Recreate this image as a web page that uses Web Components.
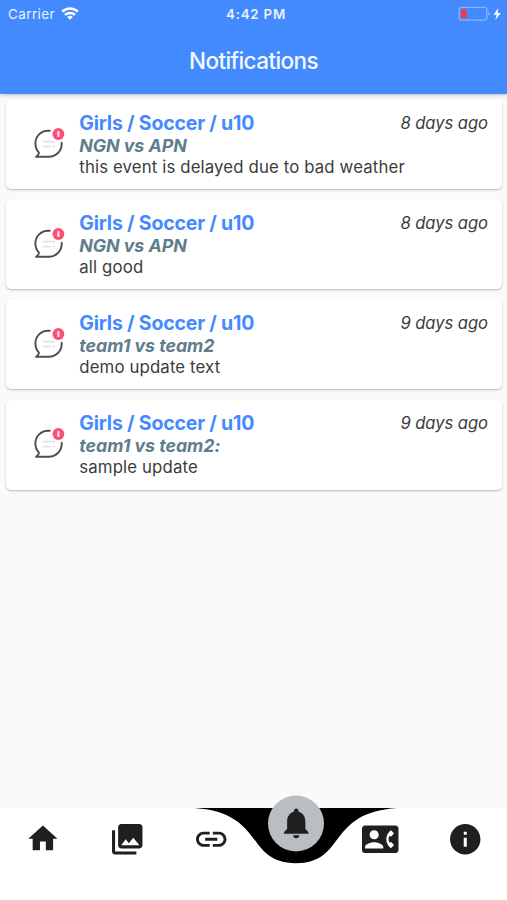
<!DOCTYPE html>
<html lang="en">
<head>
<meta charset="utf-8">
<title>Notifications</title>
<style>
html,body{margin:0;height:100%}
body{font-family:Inter,"Liberation Sans",sans-serif;background:#fafafa;overflow:hidden}
</style>
</head>
<body>
<app-screen></app-screen>
<script>
const define=(name,html)=>{
  const t=document.createElement('template');t.innerHTML=html;
  customElements.define(name,class extends HTMLElement{
    constructor(){super();this.attachShadow({mode:'open'}).append(t.content.cloneNode(true));}
  });
};

define('status-bar',`<style>
:host{display:grid;grid-template-columns:1fr auto 1fr;align-items:center;height:26px;padding:1px 5px 0 8px;box-sizing:border-box;color:#e9f1ff;font-size:13.5px;line-height:24px}
.l{display:flex;align-items:center;gap:6px}
.l span{letter-spacing:.38px}
.t{font-weight:600;font-size:13.3px;letter-spacing:.8px;transform:translateX(1px)}
.r{display:flex;justify-content:flex-end;align-items:center}
svg{display:block}
</style>
<div class="l"><span>Carrier</span>
<svg width="18" height="13" viewBox="0 0 18 13" fill="none" stroke="#fff" stroke-width="2.5"><path d="M1.200 4.700a11.200 11.200 0 0 1 15.600 0"/><path d="M4 7.900a7.200 7.200 0 0 1 10 0"/><path d="M9 12.800 6.200 10a4 4 0 0 1 5.600 0z" fill="#fff" stroke="none"/></svg></div>
<div class="t">4:42 PM</div>
<div class="r"><svg width="44" height="16" viewBox="0 0 44 16"><rect x="1.1" y="1.3" width="27.8" height="12.8" rx="2.6" fill="none" stroke="#86b4ff" stroke-width="1.3"/><rect x="3" y="3.2" width="5.6" height="9" rx="1" fill="#ee3d45"/><path d="M30.400 5.500c1.600.6 1.600 3.800 0 4.400z" fill="#8db8ff"/><path d="M40.300 2 35.600 8.800h3.100L37.300 14l5.500-7h-3.300z" fill="#fff"/></svg></div>`);

define('app-header',`<style>
:host{display:flex;flex-direction:column;height:94px;background:#448aff;box-shadow:0 1px 4px rgba(0,0,0,.24);position:relative;z-index:1}
h1{margin:0;flex:1;display:flex;align-items:center;justify-content:center;color:#f5f9ff;font-size:22.5px;font-weight:500;letter-spacing:-.6px}
</style><status-bar></status-bar><h1><slot></slot></h1>`);

define('chat-icon',`<style>:host{display:block;width:32px;height:34px}svg{display:block}</style>
<svg width="32" height="34" viewBox="0 0 32 34" fill="none"><path d="M16.800 4.800H15.200C7.900 4.800 2.400 10.200 2.400 17.500c0 3.800 1.400 6.800 3.500 9.200.5 1.100-1.300 2.700-2.800 4.100h12.400c7.500 0 13.200-5.800 13.200-13.100v-.9" stroke="#4c4e50" stroke-width="1.9" stroke-linecap="round" stroke-linejoin="round"/><path d="M10.600 15.600h10.300M10.600 20.600h6.500M20.500 20.600h.9" stroke="#dfe3e6" stroke-width="1.7" stroke-linecap="round"/><circle cx="25.400" cy="8" r="5.900" fill="#fb4f75"/><rect x="24.200" y="5" width="2.400" height="6" rx="1" fill="#ffdce4"/></svg>`);

define('notice-card',`<style>
:host{display:flex;box-sizing:border-box;height:90px;padding:11.500px 14px 0 27px;background:#fff;border-radius:5px;box-shadow:0 1px 2px rgba(0,0,0,.22),0 1px 3px rgba(0,0,0,.05)}
chat-icon{margin:15px 14.300px 0 0}
.m{flex:1;min-width:0;white-space:nowrap}
.h,.s,.b{display:block}
.h{font-size:19.500px;line-height:24px;font-weight:650;color:#448aff;letter-spacing:-.2px}
.s{font-size:17.800px;line-height:21px;font-weight:650;font-style:italic;color:#607d8b;letter-spacing:-.05px}
.b{font-size:16.800px;line-height:22px;color:#3c3c3c;letter-spacing:.13px}
.d{font-size:16.600px;line-height:25px;font-style:italic;color:#3c3c3c;white-space:nowrap;margin-left:-120px;letter-spacing:-.05px}
</style><chat-icon></chat-icon><div class="m"><span class="h"><slot name="title"></slot></span><span class="s"><slot name="teams"></slot></span><span class="b"><slot></slot></span></div><span class="d"><slot name="date"></slot></span>`);

define('notice-list',`<style>:host{display:flex;flex-direction:column;gap:10.200px;padding:5px 5px 0 6px;flex:1}</style><slot></slot>`);

const icons={
home:'<path transform="translate(.9 .1) scale(.96)" d="M10 20v-6h4v6h5v-8h3L12 3 2 12h3v8z"/>',
photos:'<path d="M22 16V4c0-1.1-.9-2-2-2H8c-1.1 0-2 .9-2 2v12c0 1.100.9 2 2 2h12c1.100 0 2-.9 2-2zm-11-4 2.030 2.710L16 11l4 5H8l3-4zM2 6v14c0 1.100.9 2 2 2h14v-2H4V6H2z"/>',
link:'<path d="M3.900 12c0-1.710 1.390-3.100 3.100-3.100h4V7H7c-2.760 0-5 2.240-5 5s2.240 5 5 5h4v-1.900H7c-1.710 0-3.100-1.390-3.100-3.100zM8 13h8v-2H8v2zm9-6h-4v1.900h4c1.710 0 3.100 1.390 3.100 3.100s-1.390 3.100-3.100 3.100h-4V17h4c2.760 0 5-2.240 5-5s-2.240-5-5-5z"/>',
bell:'<path transform="translate(0 -.5)" d="M12 22c1.100 0 2-.9 2-2h-4c0 1.100.89 2 2 2zm6-6v-5c0-3.070-1.640-5.640-4.500-6.320V4c0-.83-.67-1.500-1.500-1.500s-1.500.67-1.500 1.500v.68C7.630 5.360 6 7.920 6 11v5l-2 2v1h16v-1l-2-2z"/>',
contact:'<path d="M22 3H2C.9 3 0 3.900 0 5v14c0 1.100.9 2 2 2h20c1.100 0 1.990-.9 1.990-2L24 5c0-1.100-.9-2-2-2zM8 6c1.660 0 3 1.340 3 3s-1.340 3-3 3-3-1.340-3-3 1.340-3 3-3zm6 12H2v-1c0-2 4-3.100 6-3.100s6 1.100 6 3.100v1zm3.850-4h1.640L21 16l-1.990 1.990c-1.310-.98-2.280-2.380-2.730-3.990-.18-.64-.28-1.310-.28-2s.1-1.360.28-2c.45-1.620 1.420-3.010 2.730-3.990L21 8l-1.510 2h-1.640c-.22.63-.35 1.300-.35 2s.13 1.370.35 2z"/>',
info:'<path d="M12 2C6.480 2 2 6.480 2 12s4.480 10 10 10 10-4.480 10-10S17.520 2 12 2zm1 15h-2v-6h2v6zm0-8h-2V7h2v2z"/>'
};
customElements.define('nav-icon',class extends HTMLElement{
  constructor(){super();this.attachShadow({mode:'open'});}
  connectedCallback(){this.shadowRoot.innerHTML=`<style>:host{display:block;width:36.5px;height:36.5px}svg{display:block;width:100%;height:100%;fill:#1f1f1f}</style><svg viewBox="0 0 24 24">${icons[this.getAttribute('name')]}</svg>`;}
});

define('bottom-nav',`<style>
:host{display:block;position:relative;height:92px;background:#fff}
.notch{position:absolute;left:0;top:0}
.items{position:relative;display:grid;grid-template-columns:repeat(6,1fr);justify-items:center;align-items:center;height:62px}
.fab{width:56px;height:56px;border-radius:50%;background:#b9bec3;display:grid;place-items:center;transform:translateY(-15.5px)}
</style><svg class="notch" width="507" height="92" viewBox="0 0 507 92"><path d="M194.400 0C265.300 4.600 245 55.200 295.800 55.200S326.100 4.600 397.200 0z"/></svg>
<div class="items"><nav-icon name="home"></nav-icon><nav-icon name="photos"></nav-icon><nav-icon name="link"></nav-icon><div class="fab"><nav-icon name="bell"></nav-icon></div><nav-icon name="contact"></nav-icon><nav-icon name="info"></nav-icon></div>`);

define('app-screen',`<style>:host{display:flex;flex-direction:column;width:507px;height:900px;background:#fafafa}</style>
<app-header>Notifications</app-header>
<notice-list>
<notice-card><span slot="title">Girls / Soccer / u10</span><span slot="teams">NGN vs APN</span>this event is delayed due to bad weather<span slot="date">8 days ago</span></notice-card>
<notice-card><span slot="title">Girls / Soccer / u10</span><span slot="teams">NGN vs APN</span>all good<span slot="date">8 days ago</span></notice-card>
<notice-card><span slot="title">Girls / Soccer / u10</span><span slot="teams">team1 vs team2</span>demo update text<span slot="date">9 days ago</span></notice-card>
<notice-card><span slot="title">Girls / Soccer / u10</span><span slot="teams">team1 vs team2:</span>sample update<span slot="date">9 days ago</span></notice-card>
</notice-list>
<bottom-nav></bottom-nav>`);
</script>
</body>
</html>
